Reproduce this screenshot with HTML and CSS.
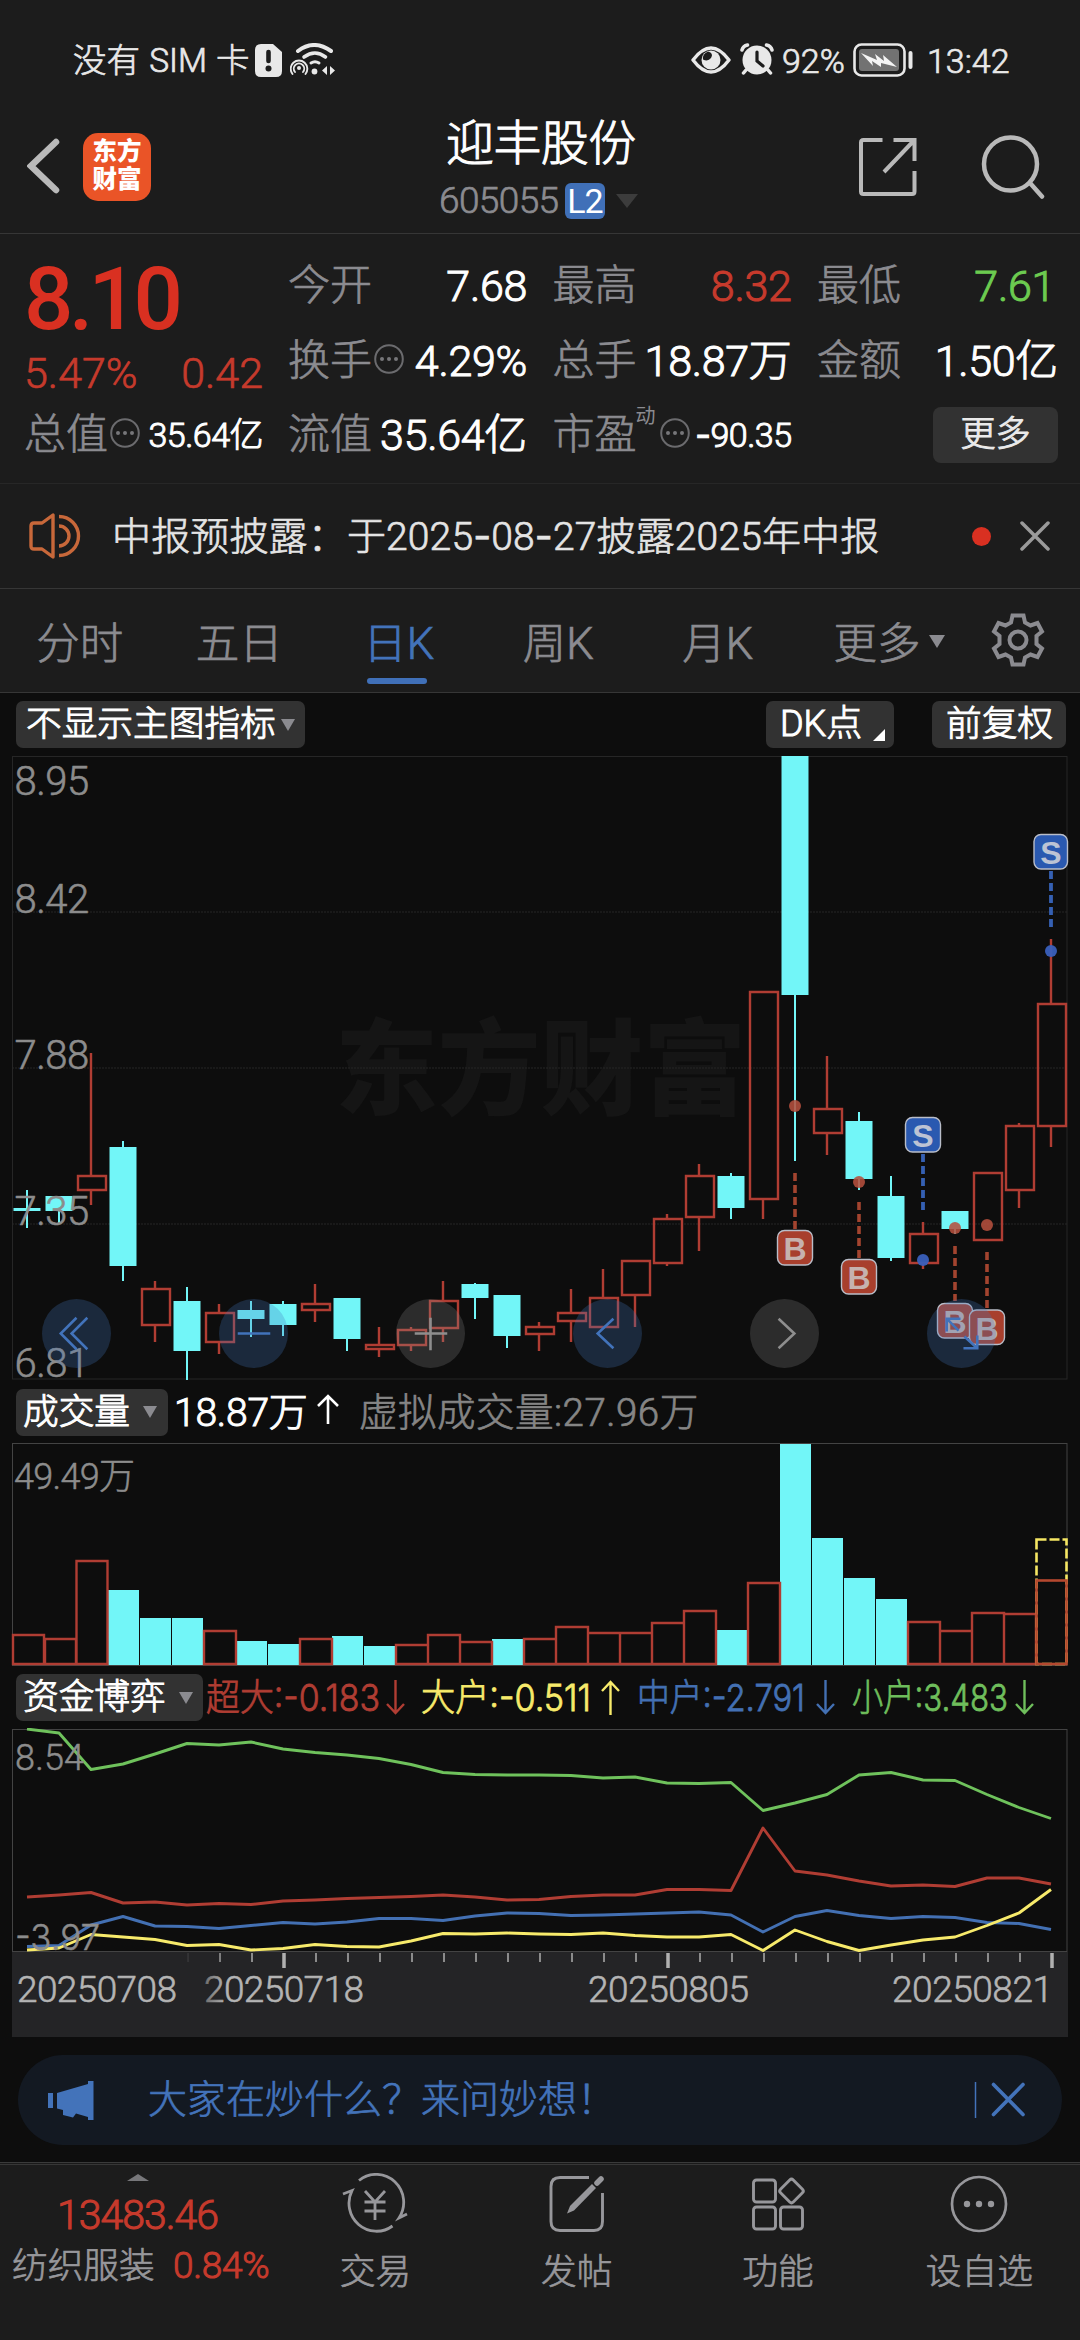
FILE: index.html
```html
<!DOCTYPE html>
<html lang="zh-CN">
<head>
<meta charset="utf-8">
<title>迎丰股份 605055</title>
<link rel="stylesheet" href="styles.css">
</head>
<body>
<svg width="0" height="0" class="defs">
  <symbol id="more-dot" viewBox="0 0 30 30"><circle cx="15" cy="15" r="13.8" fill="none" stroke="#6b6b6e" stroke-width="2"/><g fill="#77777a"><circle cx="8" cy="15" r="2"/><circle cx="15" cy="15" r="2"/><circle cx="22" cy="15" r="2"/></g></symbol>
</svg>

<header class="status">
  <span class="sim">没有 SIM 卡</span>
  <svg class="ic-sim" width="27" height="33" viewBox="0 0 27 33"><path d="M6 0H18L27 8V27Q27 33 21 33H6Q0 33 0 27V6Q0 0 6 0Z" fill="#e8e8e8"/><path d="M13.5 8V17" stroke="#1c1c1c" stroke-width="4.6" stroke-linecap="round"/><circle cx="13.5" cy="24.5" r="3" fill="#1c1c1c"/></svg>
  <svg class="ic-wifi" width="46" height="33" viewBox="0 0 46 33" fill="none" stroke="#e8e8e8" stroke-linecap="round"><path d="M8 8Q24-4 41 8" stroke-width="4"/><path d="M14 14Q25 6 35.500 14" stroke-width="3.600"/><path d="M21 20Q25 17.500 29 20" stroke-width="3"/><circle cx="24.500" cy="28.500" r="2.900" fill="#e8e8e8" stroke="none"/><circle cx="9" cy="25" r="2" fill="#e8e8e8" stroke="none"/><path d="M5 29A5.200 5.200 0 1 1 13 29" stroke-width="1.900"/><path d="M2.500 31A8.300 8.300 0 1 1 15.500 31" stroke-width="1.900"/><path d="M32 27.500L37 23V32ZM45 27.500L40 23V32Z" fill="#e8e8e8" stroke="none"/></svg>
  <svg class="ic-eye" width="40" height="28" viewBox="0 0 40 28"><path d="M2 14Q20-10 38 14Q20 38 2 14Z" fill="none" stroke="#e8e8e8" stroke-width="3.400" stroke-linejoin="round"/><circle cx="20" cy="14" r="9.500" fill="#e8e8e8"/><path d="M17 5.500Q23 7 20 12Q17 16 12 13.500Q11 8 17 5.500Z" fill="#1c1c1c"/></svg>
  <svg class="ic-alarm" width="34" height="33" viewBox="0 0 34 33"><circle cx="17" cy="17" r="14.500" fill="#e8e8e8"/><path d="M2 7Q3 3 7.500 2M32 7Q31 3 26.500 2M6 27L3.500 30M28 27L30.500 30" stroke="#e8e8e8" stroke-width="3.500" stroke-linecap="round" fill="none"/><path d="M17 9V18L23 23" fill="none" stroke="#1c1c1c" stroke-width="3.200" stroke-linecap="round"/></svg>
  <span class="pct">92%</span>
  <svg class="ic-bat" width="61" height="34" viewBox="0 0 61 34"><rect x="1.500" y="1.500" width="50" height="31" rx="7" fill="none" stroke="#e8e8e8" stroke-width="2.600"/><rect x="6" y="6" width="40" height="22" rx="3" fill="#727272"/><path d="M8 10L24 17L22 11L31 18L30 12L44 24L28 20L28 24L19 18L20 23Z" fill="#f4f4f4"/><path d="M57.500 10V24" stroke="#e8e8e8" stroke-width="4" stroke-linecap="round"/></svg>
  <span class="time">13:42</span>
</header>

<nav class="head">
  <svg class="back" width="34" height="56" viewBox="0 0 34 56"><path d="M29 4L4 28L29 52" fill="none" stroke="#b9b9b9" stroke-width="6.500" stroke-linecap="round"/></svg>
  <div class="logo"><span>东方</span><span>财富</span></div>
  <div class="title">
    <h1>迎丰股份</h1>
    <div class="code"><span>605055</span><b>L2</b><i></i></div>
  </div>
  <svg class="share" width="60" height="60" viewBox="0 0 60 60" fill="none" stroke="#b9b9b9" stroke-width="4"><path d="M24.500 3H5.500Q3 3 3 5.500V54.500Q3 57 5.500 57H54Q56.500 57 56.500 54.500V34M35.500 3H56.500V24M56 3.500L26 35"/></svg>
  <svg class="search" width="64" height="66" viewBox="0 0 64 66" fill="none" stroke="#b9b9b9" stroke-width="4.500" stroke-linecap="round"><circle cx="29.500" cy="30" r="26.500"/><path d="M49 49L61 62.500"/></svg>
</nav>

<section class="quote">
  <div class="price">
    <div class="last">8.10</div>
    <div class="chg"><span>5.47%</span><span>0.42</span></div>
    <div class="cell small"><span>总值</span><svg class="dot" width="30" height="30"><use href="#more-dot"/></svg><b>35.64亿</b></div>
  </div>
  <div class="stats">
    <div class="cell"><span>今开</span><b>7.68</b></div>
    <div class="cell"><span>最高</span><b class="up">8.32</b></div>
    <div class="cell"><span>最低</span><b class="down">7.61</b></div>
    <div class="cell"><span>换手</span><svg class="dot" width="30" height="30"><use href="#more-dot"/></svg><b>4.29%</b></div>
    <div class="cell"><span>总手</span><b>18.87万</b></div>
    <div class="cell"><span>金额</span><b>1.50亿</b></div>
    <div class="cell"><span>流值</span><b>35.64亿</b></div>
    <div class="cell small"><span>市盈</span><sup>动</sup><svg class="dot" width="30" height="30"><use href="#more-dot"/></svg><b><em>-</em>90.35</b></div>
    <div class="cell"><button class="more">更多</button></div>
  </div>
</section>

<section class="notice">
  <svg width="52" height="46" viewBox="0 0 52 46" fill="none" stroke="#c8683a" stroke-width="3.400" stroke-linejoin="round"><path d="M24 2V44L13 36H5Q2 36 2 33V13Q2 10 5 10H13Z"/><path d="M30 3.500A19.500 19.500 0 0 1 30 42.500M30 13A10 10 0 0 1 30 33"/></svg>
  <p>中报预披露：于2025<em>-</em>08<em>-</em>27披露2025年中报</p>
  <i></i>
  <svg class="x" width="30" height="30" viewBox="0 0 30 30"><path d="M2 2L28 28M28 2L2 28" stroke="#9a9a9a" stroke-width="3.500" stroke-linecap="round"/></svg>
</section>

<nav class="tabs">
  <a>分时</a><a>五日</a><a class="on">日K</a><a>周K</a><a>月K</a><a class="drop">更多</a>
  <svg class="gear" width="54" height="54" viewBox="-27 -27 54 54" fill="none" stroke="#8b8b90" stroke-width="4" stroke-linejoin="miter"><circle r="8.500"/><path d="M-5.500-24.500H5.500L7-17.500L12.500-14.500L19.500-17L24-8.500L18.500-4V4L24 8.500L19.500 17L12.500 14.500L7 17.500L5.500 24.500H-5.500L-7 17.500L-12.500 14.500L-19.500 17L-24 8.500L-18.500 4V-4L-24-8.500L-19.500-17L-12.500-14.500L-7-17.500Z"/></svg>
</nav>

<main>
  <div class="bar bar-main">
    <button class="chip c1">不显示主图指标<i></i></button>
    <button class="chip c2">DK点<svg width="12" height="12"><path d="M12 0V12H0Z" fill="#fff"/></svg></button>
    <button class="chip c3">前复权</button>
  </div>

  <div class="kline">
    <svg width="1080" height="625" viewBox="0 756 1080 625">
      <text class="mark" x="335" y="1107" textLength="411" lengthAdjust="spacingAndGlyphs">东方财富</text>
      <g class="grid"><path d="M12 912H1067M12 1068H1067M12 1224H1067"/></g>
      <rect x="12.500" y="756.500" width="1054.500" height="622.500" fill="none" stroke="#262626"/>
      <g class="cy">
        <path class="w" d="M27 1190V1228M59 1211V1223M123 1141V1281"/>
        <path class="w" d="M187 1287V1380M251 1301V1337M283 1301V1336M347 1298V1351M475 1283V1319M507 1295V1348M731 1173V1219M795 995V1161M859 1112V1190M891 1176V1261M955 1229V1234"/>
        <path d="M13.500 1208h27v3h-27zM45.500 1196h27v15h-27zM109.500 1147h27v119h-27zM173.500 1301h27v50h-27zM237.500 1310h27v9h-27zM269.500 1304h27v21h-27zM333.500 1298h27v41h-27zM461.500 1284h27v14h-27zM493.500 1295h27v41h-27zM717.500 1176h27v32h-27zM781.500 756h27v239h-27zM845.500 1121h27v58h-27zM877.500 1196h27v62h-27zM941.500 1211h27v18h-27z"/>
      </g>
      <g class="rd">
        <path d="M91 1053V1175M91 1191V1205M155 1281V1288M155 1326V1342M219 1304V1312M219 1343V1354M315 1284V1303M315 1311V1322M379 1327V1344M379 1349V1357M411 1327V1329M411 1346V1351M443 1281V1300M443 1329V1342M539 1322V1326M539 1335V1351M571 1289V1312M571 1322V1342M603 1269V1297M635 1296V1327M667 1214V1218M667 1264V1266M699 1164V1175M699 1218V1251M763 1200V1219M827 1056V1108M827 1133V1155M923 1222V1233M923 1264V1269M1019 1123V1125M1019 1191V1208M1051 939V1003M1051 1127V1147"/>
        <path d="M78 1176h28v14h-28zM142 1289h28v36h-28zM206 1313h28v29h-28zM302 1304h28v6h-28zM366 1345h28v4h-28zM398 1330h28v15h-28zM430 1301h28v27h-28zM526 1327h28v7h-28zM558 1313h28v8h-28zM590 1298h28v29h-28zM622 1261h28v34h-28zM654 1219h28v44h-28zM686 1176h28v41h-28zM750 992h28v207h-28zM814 1109h28v24h-28zM910 1234h28v29h-28zM974 1173h28v67h-28zM1006 1126h28v64h-28zM1038 1004h28v122h-28z"/>
      </g>
      <g class="bdash"><path d="M795 1173V1229M859 1202V1258M955 1246V1301M987 1252V1308"/></g>
      <g class="sdash"><path d="M923 1154V1210M1051 871V927"/></g>
      <g fill="#b5503d" fill-opacity=".88"><circle cx="795" cy="1106" r="6"/><circle cx="859" cy="1182" r="6"/><circle cx="955" cy="1228" r="6"/><circle cx="987" cy="1225" r="6"/></g>
      <g fill="#3a60bd" fill-opacity=".95"><circle cx="923" cy="1260" r="6"/><circle cx="1051" cy="951" r="6"/></g>
      <g class="badge b">
        <rect x="777.500" y="1230.500" width="35" height="34.500" rx="7"/><text x="795" y="1260">B</text>
        <rect x="841.500" y="1259.500" width="35" height="34.500" rx="7"/><text x="859" y="1289">B</text>
        <rect x="937.500" y="1303.500" width="35" height="34.500" rx="7"/><text x="955" y="1333">B</text>
        <rect x="969.500" y="1310" width="35" height="34.500" rx="7"/><text x="987" y="1339.500">B</text>
      </g>
      <g class="badge s">
        <rect x="905.500" y="1117.500" width="35" height="34.500" rx="7"/><text x="923" y="1147">S</text>
        <rect x="1034" y="834.500" width="33.500" height="34.500" rx="7"/><text x="1051" y="864">S</text>
      </g>
      <g class="ylab"><text x="14.500" y="795">8.95</text><text x="14.500" y="913">8.42</text><text x="14.500" y="1069">7.88</text><text x="14.500" y="1225">7.35</text><text x="14.500" y="1377">6.81</text></g>
    </svg>
    <div class="tools">
      <button class="blue"><svg viewBox="-35 -35 70 70"><path d="M0-16L-16 0L0 16M11-16L-5 0L11 16"/></svg></button>
      <button class="blue"><svg viewBox="-35 -35 70 70"><path d="M-16 0H17"/></svg></button>
      <button><svg viewBox="-35 -35 70 70"><path d="M-16 0H17M0-16V17"/></svg></button>
      <button class="blue"><svg viewBox="-35 -35 70 70"><path d="M6-15L-10 0L6 15"/></svg></button>
      <button><svg viewBox="-35 -35 70 70"><path d="M-6-15L10 0L-6 15"/></svg></button>
      <button class="blue"><svg viewBox="-35 -35 70 70"><path d="M-15-2V-15H-1M-15-15L-3-3M3 3L16 15M2 15H16V2"/></svg></button>
    </div>
  </div>

  <div class="bar bar-vol">
    <button class="chip c4">成交量<i></i></button>
    <span class="now">18.87万</span>
    <svg class="arr" width="22" height="34" viewBox="0 0 22 34" fill="none" stroke="#fff" stroke-width="2.600"><path d="M11 31V3M1 13L11 3L21 13"/></svg>
    <span class="virt">虚拟成交量:27.96万</span>
  </div>

  <svg class="vol" width="1080" height="224" viewBox="0 1443 1080 224">
    <rect x="12.500" y="1443.500" width="1054.500" height="222" fill="none" stroke="#434343"/>
    <g class="ylab2"><text x="14" y="1489" textLength="121">49.49万</text></g>
    <path fill="#72f6f8" d="M108 1590h31v75h-31zM140 1618h31v47h-31zM172 1618h31v47h-31zM236 1641h31v24h-31zM268 1644h31v21h-31zM332 1636h31v29h-31zM364 1646h31v19h-31zM492 1639h31v26h-31zM716 1630h31v35h-31zM780 1444h31v221h-31zM812 1538h31v127h-31zM844 1578h31v87h-31zM876 1599h31v66h-31z"/>
    <g class="rd"><path d="M13 1635h31v29h-31zM45 1639h31v25h-31zM76.500 1561h31v103h-31zM204 1631h32v33h-32zM300 1639h32v25h-32zM396 1645h32v19h-32zM428 1635h32v29h-32zM460 1642h32v22h-32zM524 1639h32v25h-32zM556 1627h32v37h-32zM588 1633h32v31h-32zM620 1633h32v31h-32zM652 1623h32v41h-32zM684 1611h32v53h-32zM748 1583h32v81h-32zM908 1622h32v42h-32zM940 1631h32v33h-32zM972 1613h32v51h-32zM1004 1614h32v50h-32z"/></g>
    <rect x="1036.500" y="1539.500" width="30" height="124.500" fill="none" stroke="#f5e663" stroke-width="2.600" stroke-dasharray="10 3"/>
    <rect x="1036.500" y="1580.500" width="30" height="83.500" fill="none" stroke="#b5482f" stroke-width="2.600"/>
  </svg>

  <div class="bar bar-fund">
    <button class="chip c5">资金博弈<i></i></button>
    <svg class="legend" width="840" height="46" viewBox="206 1674 840 46">
      <text fill="#b03d33" stroke="#b03d33" x="206" y="1710" textLength="174" lengthAdjust="spacingAndGlyphs">超大:-0.183</text>
      <text fill="#f7ea6b" stroke="#f7ea6b" x="421" y="1710" textLength="170" lengthAdjust="spacingAndGlyphs">大户:-0.511</text>
      <text fill="#4370b3" stroke="#4370b3" x="637" y="1710" textLength="168" lengthAdjust="spacingAndGlyphs">中户:-2.791</text>
      <text fill="#6fbe5c" stroke="#6fbe5c" x="852" y="1710" textLength="156" lengthAdjust="spacingAndGlyphs">小户:3.483</text>
      <g fill="none" stroke-width="2.400"><path stroke="#b03d33" d="M395.500 1679V1712M387 1703L395.500 1712L404 1703"/><path stroke="#f7ea6b" d="M610.500 1714V1681M602 1690L610.500 1681L619 1690"/><path stroke="#4370b3" d="M825.500 1679V1712M817 1703L825.500 1712L834 1703"/><path stroke="#6fbe5c" d="M1024.500 1679V1712M1016 1703L1024.500 1712L1033 1703"/></g>
    </svg>
  </div>

  <svg class="fund" width="1080" height="309" viewBox="0 1728 1080 309">
    <defs><linearGradient id="fade" x1="0" x2="1"><stop offset="0" stop-color="#242426"/><stop offset=".2" stop-color="#242426" stop-opacity=".8"/><stop offset="1" stop-color="#242426" stop-opacity="0"/></linearGradient></defs>
    <rect x="12" y="1952" width="1056" height="85" fill="#242426"/>
    <rect x="12.500" y="1729.500" width="1054.500" height="222" fill="none" stroke="#434343"/>
    <g fill="none" stroke-width="2.900" stroke-linejoin="round">
      <polyline stroke="#4370b3" points="27,1946.500 59,1945.500 91,1925 123,1916.500 155,1926 187,1926.500 219,1928.500 251,1925.500 283,1922.500 315,1924 347,1922 379,1918.500 411,1918.500 443,1920.500 475,1916 507,1913 539,1913.500 571,1915.500 603,1915 635,1914 667,1913 699,1912 731,1915 763,1932 795,1916.500 827,1910.500 859,1915.500 891,1918.500 923,1916.500 955,1917.500 987,1922.500 1019,1923.500 1051,1929.500"/>
      <polyline stroke="#f7ea6b" points="27,1950 59,1948 91,1934.500 123,1937 155,1939.500 187,1945.500 219,1944.500 251,1950 283,1948.500 315,1944.500 347,1946.500 379,1947 411,1941 443,1933.500 475,1934 507,1933 539,1934 571,1934.500 603,1933 635,1935.500 667,1937 699,1937 731,1934.500 763,1950.500 795,1930 827,1941.500 859,1950.500 891,1945 923,1940 955,1937 987,1925.500 1019,1913 1051,1889.500"/>
      <polyline stroke="#b03d33" points="27,1897 59,1895 91,1892.500 123,1903 155,1902 187,1905 219,1903.500 251,1904.500 283,1901 315,1900 347,1898.500 379,1897.500 411,1896.500 443,1895 475,1897 507,1900 539,1899.500 571,1896.500 603,1895 635,1895 667,1889.500 699,1889.500 731,1890.500 763,1828 795,1871 827,1875 859,1881 891,1886 923,1885 955,1886.500 987,1878 1019,1878 1051,1884"/>
      <polyline stroke="#6fc25c" points="27,1729 59,1733 91,1769.500 123,1764 155,1754 187,1743.500 219,1745 251,1742 283,1749 315,1752.500 347,1755 379,1758.500 411,1764.500 443,1772.500 475,1774.500 507,1775 539,1775 571,1775.500 603,1778 635,1777 667,1783 699,1783.500 731,1782.500 763,1810.500 795,1803 827,1794.500 859,1775 891,1772.500 923,1780 955,1780.500 987,1794.500 1019,1807.500 1051,1818.500"/>
    </g>
    <g class="ylab2"><text x="15" y="1770" textLength="69">8.54</text><text class="neg" x="15" y="1950" textLength="85" lengthAdjust="spacingAndGlyphs">-3.97</text></g>
    <path stroke="#8b8b8b" stroke-width="2" fill="none" d="M188 1953V1962M220 1953V1962M252 1953V1962M316 1953V1962M348 1953V1962M380 1953V1962M412 1953V1962M444 1953V1962M476 1953V1962M508 1953V1962M540 1953V1962M572 1953V1962M604 1953V1962M636 1953V1962M700 1953V1962M732 1953V1962M764 1953V1962M796 1953V1962M828 1953V1962M860 1953V1962M892 1953V1962M924 1953V1962M956 1953V1962M988 1953V1962M1020 1953V1962"/>
    <path stroke="#b0b0b0" stroke-width="3.500" d="M284 1953V1968M668 1953V1968M1052 1953V1968"/>
    <g class="date"><text x="204" y="2002" textLength="160">20250718</text><text x="588" y="2002" textLength="161">20250805</text><text x="892" y="2002" textLength="161">20250821</text></g>
    <rect x="182" y="1953" width="44" height="60" fill="url(#fade)"/>
    <g class="date"><text x="17" y="2002" textLength="160">20250708</text></g>
  </svg>

  <div class="ask">
    <svg class="horn" width="46" height="40" viewBox="0 0 46 40" fill="#4373ba"><path d="M0 13H5V28H0ZM9 13L40 4V1H45.500V40H40V37L28 33.500L25 37.500L15 35V30L9 28.500Z"/></svg>
    <p>大家在炒什么？来问妙想！</p>
    <svg class="askx" width="52" height="38" viewBox="0 0 52 38" fill="none" stroke="#4373ba"><path d="M1.500 1V37" stroke-width="1.500"/><path d="M19.500 3.500L49 33.500M49 3.500L19.500 33.500" stroke-width="3.600" stroke-linecap="round"/></svg>
  </div>
</main>

<footer>
  <div class="index">
    <i></i>
    <div class="pts">13483.46</div>
    <div class="sec"><span>纺织服装</span><b>0.84%</b></div>
  </div>
  <a><svg width="66" height="62" viewBox="-33 -31 66 62" fill="none" stroke="#97979b" stroke-width="2.800"><path d="M-16-23.500A27.500 28 0 0 1 24 14L32 10M17.500 22A27.500 28 0 0 1-23-13.500L-32-10"/><path d="M-10-13L0-2L10-13M0-2V16M-10.500-2H10.500M-10.500 7H10.500"/></svg><span>交易</span></a>
  <a><svg width="66" height="62" viewBox="-33 -31 66 62" fill="none" stroke="#97979b" stroke-width="2.900"><path d="M12-26.500H-17Q-26-26.500-26-17.500V17.500Q-26 26.500-17 26.500H17Q25.500 26.500 25.500 17.500V-11"/><path d="M-10 9.500L-7 2L15-20L19-16L-3 6.500Z" fill="#97979b" stroke="none"/><path d="M20-21L24-25" stroke-width="5.500" stroke-linecap="round"/></svg><span>发帖</span></a>
  <a><svg width="66" height="62" viewBox="-33 -31 66 62" fill="none" stroke="#97979b" stroke-width="2.900"><rect x="-24.500" y="-24" width="22" height="22" rx="3"/><rect x="-24.500" y="3" width="22" height="22" rx="3"/><rect x="2.500" y="3" width="22" height="22" rx="3"/><rect x="4.500" y="-22" width="18" height="18" rx="2.500" transform="rotate(45 13.500 -13)"/></svg><span>功能</span></a>
  <a><svg width="66" height="62" viewBox="-33 -31 66 62"><circle r="27" fill="none" stroke="#97979b" stroke-width="2.700"/><g fill="#97979b"><circle cx="-12" r="3.200"/><circle r="3.200"/><circle cx="12" r="3.200"/></g></svg><span>设自选</span></a>
</footer>
</body>
</html>
```
FILE: styles.css
```css
* { box-sizing: border-box; margin: 0; padding: 0; }
body {
  width: 1080px; height: 2340px; overflow: hidden;
  background: #1c1c1c; color: #fff;
  font-family: Roboto, "Noto Sans CJK SC", sans-serif;
  display: flex; flex-direction: column;
}
.defs { position: absolute; }
svg { display: block; flex: none; }
button { border: 0; background: none; color: inherit; font: inherit; }
b, i, em, h1 { font-weight: 400; font-style: normal; }
em { font-family: Inter, sans-serif; }
span, p, b { white-space: nowrap; }

/* light text with slightly thickened strokes */
.status, .code span, .chg, .cell span, .tabs a, .virt, .sec span, footer a span, .ask p, .notice p { font-weight: 300; -webkit-text-stroke: .7px currentColor; }
.chip, .more, .cell b, .pts, .sec b, .now, .title h1 { font-weight: 300; -webkit-text-stroke: 1px currentColor; }

/* status bar */
.status { height: 107px; padding: 14px 73px 0 73px; display: flex; align-items: center; color: #e8e8e8; font-size: 34px; line-height: 40px; }
.sim { width: 182px; font-size: 33.500px; word-spacing: 1px; }
.ic-sim { margin-top: -1px; }
.ic-wifi { margin-left: 8px; margin-top: -2px; }
.ic-eye { margin-left: auto; margin-top: -2px; }
.ic-alarm { margin-left: 9px; margin-top: -2px; }
.pct { margin-left: 8px; width: 71px; }
.ic-bat { margin-top: -1px; }
.time { margin-left: 13px; width: 80px; }

/* title bar */
.head { height: 127px; border-bottom: 1px solid #363636; display: flex; align-items: center; padding: 0 0 6px 27px; }
.back { margin-top: -2px; }
.logo { width: 68px; height: 68px; margin: -1px 0 0 22px; border-radius: 15px; background: #ea5427; display: flex; flex-direction: column; align-items: center; justify-content: center; font-weight: 900; font-size: 24.500px; line-height: 28px; padding-bottom: 2px; }
.title { width: 380px; margin: 6px 0 0 204px; display: flex; flex-direction: column; align-items: flex-start; padding-left: 91px; }
.title h1 { font-size: 48px; line-height: 58px; margin-top: 3px; letter-spacing: -.6px; }
.code { display: flex; align-items: center; height: 56px; margin-left: -7px; }
.code span { font-size: 37px; color: #8b8b90; width: 126px; letter-spacing: -.6px; }
.code b { width: 40px; height: 36px; border-radius: 6px; background: #4070b8; font-size: 34px; line-height: 37px; text-align: center; letter-spacing: -1px; }
.code i { margin-left: 11px; border: 11px solid transparent; border-top: 14px solid #3c3c3c; border-bottom: 0; }
.share { margin: -1px 0 0 123px; }
.search { margin: 0 0 0 63px; }

/* quote panel */
.quote { height: 250px; border-bottom: 1px solid #272727; display: flex; padding: 14px 0 0 25px; }
.price { width: 238px; }
.last { font-size: 87px; line-height: 102px; font-weight: 500; color: #d93021; letter-spacing: -4.500px; height: 100px; margin-left: -1px; }
.chg { display: flex; justify-content: space-between; height: 50px; font-size: 43px; line-height: 50px; color: #c63a2c; margin-left: -1px; }
.stats { margin-left: 26px; display: grid; grid-template-columns: 238px 238px 240px; column-gap: 26.500px; grid-template-rows: 75px 75px 73px; }
.cell { display: flex; align-items: center; line-height: 50px; font-size: 43px; }
.cell span { color: #8b8b90; font-size: 42px; width: 83px; margin-left: -1px; }
.cell b { margin-left: auto; letter-spacing: -.300px; }
.cell .dot { margin: -4px 0 0 3px; }
.cell.small b { font-size: 34px; letter-spacing: -.5px; }
.price .cell { height: 73px; }
.cell sup { font-size: 20px; line-height: 24px; color: #8b8b90; align-self: flex-start; margin-top: 6px; width: 20px; }
.cell sup + .dot { margin-left: 4px; }
.cell .up { color: #c63a2c; }
.cell .down { color: #6ccb50; padding-right: 3px; }
.more { margin: 0 0 0 auto; width: 125px; height: 56px; border-radius: 8px; background: #323232; color: #eaeaea; font-size: 35px; line-height: 54px; }

/* notice */
.notice { height: 105px; border-bottom: 1px solid #363636; display: flex; align-items: center; padding: 0 30px 0 29px; }
.notice p { margin-left: 31px; font-size: 39px; line-height: 50px; color: #e4e4e4; width: 857px; letter-spacing: .15px; }
.notice i { width: 19px; height: 19px; border-radius: 50%; background: #d93021; margin: 0 0 0 auto; }
.notice .x { margin-left: 29px; }

/* period tabs */
.tabs { height: 104px; border-bottom: 1px solid #363636; display: flex; align-items: center; color: #8b8b90; font-size: 43.500px; }
.tabs a { width: 159.500px; text-align: center; line-height: 60px; height: 91px; padding-top: 20px; display: flex; flex-direction: column; align-items: center; }
.tabs .on { color: #4373ba; }
.tabs .on::after { content: ""; flex: none; width: 60px; height: 6px; border-radius: 3px; background: #4070b8; margin: 3px 0 0 -3px; }
.tabs .drop { flex-direction: row; justify-content: flex-end; align-items: flex-start; width: 147px; }
.tabs .drop::after { content: ""; border: 8px solid transparent; border-top: 13px solid #8b8b90; border-bottom: 0; margin: 20px 0 0 8px; }
.gear { margin-left: 46px; margin-top: -1px; }

/* charts */
main { background: #0d0d0d; height: 1469px; display: flex; flex-direction: column; }
.bar { display: flex; align-items: center; padding-left: 16px; }
.bar-main { height: 63px; }
.bar-vol { height: 62px; }
.bar-fund { height: 61px; }
.chip { height: 47px; border-radius: 7px; background: #323232; font-size: 35.700px; line-height: 45px; display: flex; align-items: center; white-space: nowrap; padding: 0 0 0 7px; }
.chip i { border: 7.500px solid transparent; border-top: 12px solid #8b8b90; border-bottom: 0; }
.c1 { width: 289px; padding-left: 10px; }
.c1 i { margin-left: 5px; }
.c2 { width: 128px; margin-left: 461px; padding-left: 14px; font-size: 36px; }
.c2 svg { margin: 20px 0 0 11px; }
.c3 { width: 134px; margin-left: 38px; padding-left: 14px; }
.c4 { width: 152px; }
.c5 { width: 187px; }
.c4 i, .c5 i { margin-left: 13px; }
.now { margin: -7px 0 0 6px; font-size: 39px; width: 132px; letter-spacing: -.2px; }
.arr { margin: -5px 0 0 11px; }
.virt { margin: -7px 0 0 20px; font-size: 38.500px; color: #858585; letter-spacing: .5px; }
.legend { margin-left: 3px; font: 300 37px Inter, "Noto Sans CJK SC", sans-serif; stroke-width: .8px; }

.kline { position: relative; height: 625px; }
.mark { font-size: 104px; font-weight: 900; fill: #151515; }
.grid { stroke: #272727; stroke-dasharray: 2 1; fill: none; }
.cy { fill: #72f6f8; }
.cy .w { stroke: #72f6f8; stroke-width: 2; }
.rd { fill: none; stroke: #b03d33; stroke-width: 2.400; }
.bdash { stroke: #a3442f; stroke-width: 3.600; stroke-dasharray: 8 4; }
.sdash { stroke: #3560b3; stroke-width: 3.800; stroke-dasharray: 8 4; }
.badge { font: bold 32px "Liberation Sans", sans-serif; text-anchor: middle; }
.badge rect { stroke: #b9bdc8; stroke-width: 1.400; }
.badge.b rect { fill: #a83f2d; }
.badge.s rect { fill: #2a59b0; }
.badge.b text { fill: #c6b2ae; }
.badge.s text { fill: #bcc3d4; }
.ylab { font-size: 40px; font-weight: 300; fill: #8c8c8c; stroke: #8c8c8c; stroke-width: .6px; letter-spacing: -.5px; }
.ylab2 { font-size: 36px; font-weight: 300; fill: #8c8c8c; stroke: #8c8c8c; stroke-width: .5px; }
.neg { font-family: Inter, sans-serif; }
.date { font-size: 37px; fill: #b4b4b4; font-weight: 300; stroke: #b4b4b4; stroke-width: .6px; }
.tools { position: absolute; left: 42px; top: 543px; display: flex; gap: 108px; }
.tools button { width: 69px; height: 69px; border-radius: 50%; background: rgba(140, 140, 140, .25); }
.tools button.blue { background: rgba(68, 119, 190, .27); }
.tools svg { width: 69px; height: 69px; fill: none; stroke: #8e8e8e; stroke-width: 2.600; }
.tools .blue svg { stroke: #4273bb; }

.ask { height: 90px; margin: 18px 18px 0; border-radius: 45px; background: #131922; display: flex; align-items: center; padding-left: 30px; color: #4373ba; }
.ask p { margin-left: 54px; font-size: 39px; line-height: 50px; width: 824px; }
.askx { margin-left: 2px; }

/* bottom bar */
footer { height: 178px; border-top: 1px solid #3a3a3a; display: flex; box-shadow: inset 0 1px #1a1a1a, inset 0 2px #363636; }
.index { width: 275px; display: flex; flex-direction: column; }
.index i { margin: 11px 0 0 127px; width: 0; border: 11px solid transparent; border-bottom: 7px solid #77777a; border-top: 0; }
.pts { margin: 9px 0 0 57px; font-size: 41px; line-height: 50px; color: #c63a2c; letter-spacing: -1px; }
.sec { display: flex; margin: 4px 0 0 12px; line-height: 44px; }
.sec span { font-size: 35.700px; color: #97979b; width: 161px; }
.sec b { font-size: 37px; color: #c63a2c; letter-spacing: -.3px; }
footer a { width: 201.500px; display: flex; flex-direction: column; align-items: center; padding-top: 10px; }
footer a span { font-size: 35.700px; line-height: 44px; color: #97979b; margin-top: 15px; }
```
